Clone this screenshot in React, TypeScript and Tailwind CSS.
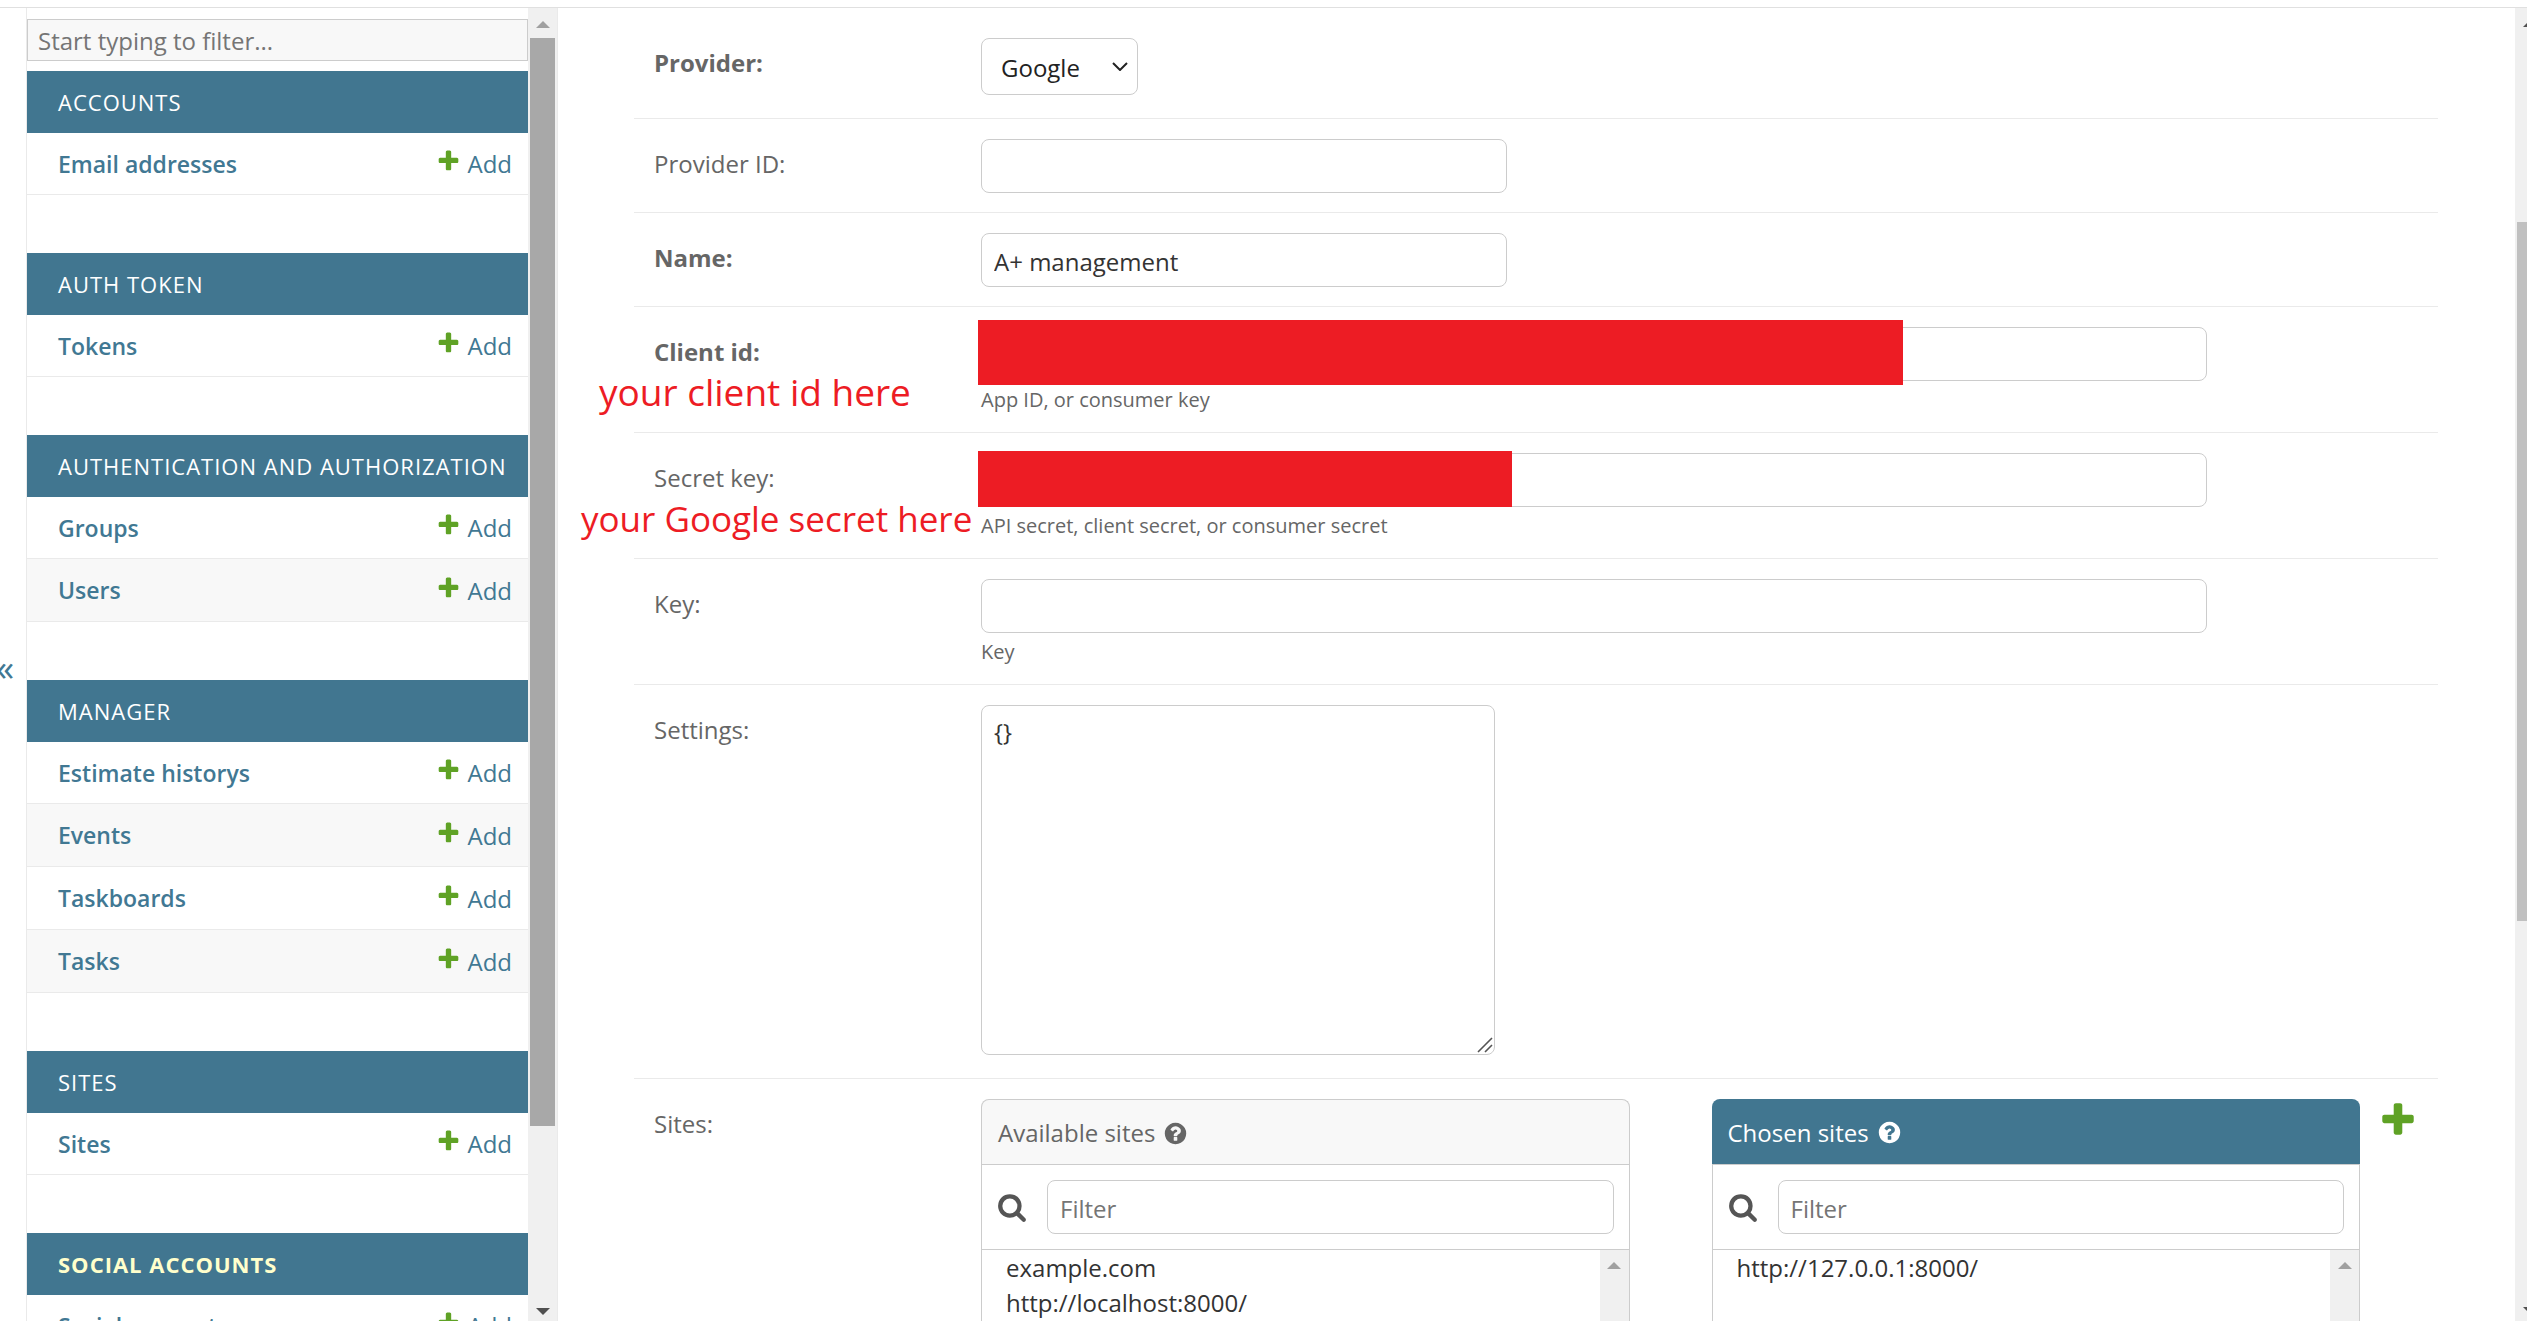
import type { ReactNode } from "react";

const PLUS =
  "M1600 796v192q0 40-28 68t-68 28h-416v416q0 40-28 68t-68 28h-192q-40 0-68-28t-28-68v-416h-416q-40 0-68-28t-28-68v-192q0-40 28-68t68-28h416v-416q0-40 28-68t68-28h192q40 0 68 28t28 68v416h416q40 0 68 28t28 68z";
const SEARCH =
  "M1216 832q0-185-131.5-316.5t-316.5-131.5-316.5 131.5-131.5 316.5 131.5 316.5 316.5 131.5 316.5-131.5 131.5-316.5zm512 832q0 52-38 90t-90 38q-54 0-90-38l-343-342q-179 124-399 124-143 0-273.5-55.5t-225-150-150-225-55.5-273.5 55.5-273.5 150-225 225-150 273.5-55.5 273.5 55.5 225 150 150 225 55.5 273.5q0 220-124 399l343 343q37 37 37 90z";
const HELP =
  "M1024 1376v-192q0-14-9-23t-23-9h-192q-14 0-23 9t-9 23v192q0 14 9 23t23 9h192q14 0 23-9t9-23zm256-672q0-88-55.5-163t-138.5-116-170-41q-243 0-371 213-15 24 8 42l132 100q7 6 19 6 16 0 25-12 53-68 86-92 34-24 86-24 48 0 85.5 26t37.5 59q0 38-20 61t-68 45q-63 28-115.5 86.5t-52.5 125.5v36q0 14 9 23t23 9h192q14 0 23-9t9-23q0-19 21.5-49.5t54.5-49.5q32-18 49-28.5t46-35 44.5-48 28-60.5 12.5-81zm384 192q0 209-103 385.5t-279.5 279.5-385.5 103-385.5-103-279.5-279.5-103-385.5 103-385.5 279.5-279.5 385.5-103 385.5 103 279.5 279.5 103 385.5z";

function Icon({ d, className }: { d: string; className: string }) {
  return (
    <svg viewBox="0 0 1792 1792" fill="currentColor" aria-hidden="true" className={className}>
      <path d={d} />
    </svg>
  );
}

function Arrow({ down = false, className }: { down?: boolean; className: string }) {
  return (
    <svg viewBox="0 0 14 7" fill="currentColor" aria-hidden="true" className={className}>
      <path d={down ? "M0 0h14L7 7z" : "M0 7h14L7 0z"} />
    </svg>
  );
}

const modules = [
  { name: "Accounts", models: ["Email addresses"] },
  { name: "Auth Token", models: ["Tokens"] },
  { name: "Authentication and Authorization", models: ["Groups", "Users"] },
  { name: "Manager", models: ["Estimate historys", "Events", "Taskboards", "Tasks"] },
  { name: "Sites", models: ["Sites"] },
  { name: "Social Accounts", models: ["Social accounts"], current: true },
];

function Sidebar() {
  return (
    <nav aria-label="Sidebar" className="flex w-[532px] shrink-0 border-x border-[#eaeaea]">
      <div className="min-w-0 flex-1 overflow-hidden pt-[11px]">
        <input
          type="search"
          aria-label="Filter navigation items"
          placeholder="Start typing to filter..."
          className="mb-[10px] block h-[42px] w-full border border-[#ccc] bg-[#f8f8f8] px-[10px] text-2xl text-[#333] outline-none placeholder:text-[#757575]"
        />
        {modules.map((m) => (
          <section key={m.name} className="mb-[58px]">
            <h2 className="flex h-[62px] items-center bg-[#417690] pt-px pl-[31px] text-[22px] whitespace-nowrap uppercase tracking-[1px]">
              <a href="#" className={m.current ? "font-bold text-[#ffc]" : "text-white"}>
                {m.name}
              </a>
            </h2>
            <ul>
              {m.models.map((model) => (
                <li
                  key={model}
                  className="flex h-[63px] items-center justify-between border-b border-[#eaeaea] pt-px pr-4 pl-[31px] text-2xl text-[#417893] first:h-[62px] even:bg-[#f8f8f8]"
                >
                  <a href="#" className="text-[23px] font-semibold">
                    {model}
                  </a>
                  <a href="#" className="flex items-center gap-1.5">
                    <Icon d={PLUS} className="mb-[7px] size-[25px] text-[#5fa225]" />
                    Add
                  </a>
                </li>
              ))}
            </ul>
          </section>
        ))}
      </div>
      <div className="flex w-[29px] shrink-0 flex-col items-center bg-[#f0f0f0]" aria-hidden="true">
        <div className="flex h-[30px] items-center pt-0.5">
          <Arrow className="h-[7px] w-[14px] text-[#a0a0a0]" />
        </div>
        <div className="w-[25px] grow-[1085] bg-[#a8a8a8]" />
        <div className="grow-[182]" />
        <div className="flex h-[13px] items-start">
          <Arrow down className="h-[7px] w-[14px] text-[#505050]" />
        </div>
      </div>
    </nav>
  );
}

const field =
  "block h-[54px] rounded-lg border border-[#ccc] bg-white px-3 pt-0.5 text-2xl text-[#333] outline-none placeholder:text-[#757575]";

type RowProps = {
  id: string;
  label: string;
  bold?: boolean;
  help?: string;
  note?: ReactNode;
  children: ReactNode;
};

function Row({ id, label, bold, help, note, children }: RowProps) {
  return (
    <div className="relative flex border-b border-[#eaeaea] px-5 pt-5 pb-[19px]">
      <label
        htmlFor={id}
        className={
          bold
            ? "w-[327px] shrink-0 self-start text-2xl leading-[50px] font-bold text-[#666]"
            : "w-[327px] shrink-0 self-start text-2xl leading-[50px] text-[#666]"
        }
      >
        {label}
      </label>
      <div className="min-w-0 flex-1">
        {children}
        {help && <p className="pt-1.5 text-xl leading-[26px] text-[#666]">{help}</p>}
      </div>
      {note}
    </div>
  );
}

function Selector({ title, chosen, options }: { title: string; chosen?: boolean; options: string[] }) {
  return (
    <div className="min-w-0 flex-1">
      <h2
        className={
          chosen
            ? "flex h-[65px] items-center gap-2 rounded-t-lg bg-[#417690] px-4 pt-0.5 text-2xl text-white"
            : "flex h-[65px] items-center gap-2 rounded-t-lg border border-b-0 border-[#ccc] bg-[#f8f8f8] px-4 pt-0.5 text-2xl text-[#666]"
        }
      >
        {title}
        <Icon d={HELP} className="size-[25px]" />
      </h2>
      <div className="flex items-center gap-5 border border-[#ccc] px-[15px] py-[15px]">
        <Icon d={SEARCH} className="size-[30px] shrink-0 text-[#555]" />
        <input type="text" placeholder="Filter" aria-label={"Filter " + title} className={field + " min-w-0 flex-1"} />
      </div>
      <div className="flex h-[300px] border-x border-[#ccc]">
        <select
          multiple
          aria-label={title}
          className="h-full min-w-0 flex-1 appearance-none overflow-hidden pt-px pl-5 text-2xl text-[#333] outline-none"
        >
          {options.map((o) => (
            <option key={o} className="h-[35px] p-0 pl-1 leading-[35px]">
              {o}
            </option>
          ))}
        </select>
        <div className="flex w-[29px] justify-center bg-[#f0f0f0] pt-3" aria-hidden="true">
          <Arrow className="h-[7px] w-[14px] text-[#a0a0a0]" />
        </div>
      </div>
    </div>
  );
}

function Note({ className, children }: { className: string; children: string }) {
  return (
    <span className={"absolute leading-10 whitespace-nowrap text-[#ed1c24] " + className}>
      {children}
    </span>
  );
}

export default function App() {
  return (
    <div className="flex h-screen flex-col overflow-hidden bg-white pt-[7px] font-['Open_Sans','Noto_Sans',sans-serif]">
      <div className="flex min-h-0 flex-1 border-t border-[#e0e0e0]">
        <button
          type="button"
          aria-label="Toggle navigation"
          className="mr-3 flex w-[14px] shrink-0 items-center justify-end overflow-hidden pt-1.5 text-4xl text-[#417893]"
        >
          «
        </button>
        <Sidebar />
        <main className="min-w-0 flex-1 overflow-hidden pt-[10px] pr-[77px] pl-[76px]">
          <form>
            <Row id="provider" label="Provider:" bold>
              <div className="relative mb-1 w-[157px]">
                <select
                  id="provider"
                  className="block h-[57px] w-full appearance-none rounded-lg border border-[#ccc] bg-white pt-0.5 pl-[19px] text-2xl text-[#222] outline-none"
                >
                  <option>Google</option>
                </select>
                <svg
                  viewBox="0 0 16 9"
                  fill="none"
                  stroke="#222"
                  strokeWidth="2"
                  aria-hidden="true"
                  className="pointer-events-none absolute top-6 right-[10px] h-[9px] w-4"
                >
                  <path d="M1 1l7 7 7-7" />
                </svg>
              </div>
            </Row>
            <Row id="provider_id" label="Provider ID:">
              <input id="provider_id" type="text" className={field + " w-[526px]"} />
            </Row>
            <Row id="name" label="Name:" bold>
              <input id="name" type="text" defaultValue="A+ management" className={field + " w-[526px]"} />
            </Row>
            <Row
              id="client_id"
              label="Client id:"
              bold
              help="App ID, or consumer key"
              note={<Note className="top-[65px] -left-[35px] text-[37px]">your client id here</Note>}
            >
              <div className="relative">
                <input id="client_id" type="text" className={field + " w-[1226px] max-w-full"} />
                <div className="absolute -top-[7px] -left-[3px] h-[65px] w-[925px] bg-[#ed1c24]" />
              </div>
            </Row>
            <Row
              id="secret"
              label="Secret key:"
              help="API secret, client secret, or consumer secret"
              note={<Note className="top-[66px] -left-[53px] text-[35px]">your Google secret here</Note>}
            >
              <div className="relative">
                <input id="secret" type="text" className={field + " w-[1226px] max-w-full"} />
                <div className="absolute -top-0.5 -left-[3px] h-[56px] w-[534px] bg-[#ed1c24]" />
              </div>
            </Row>
            <Row id="key" label="Key:" help="Key">
              <input id="key" type="text" className={field + " w-[1226px] max-w-full"} />
            </Row>
            <Row id="settings" label="Settings:">
              <div className="relative mb-1 w-[514px]">
                <textarea
                  id="settings"
                  defaultValue="{}"
                  className="block h-[350px] w-full resize-none rounded-lg border border-[#ccc] bg-white px-3 py-[10px] text-2xl text-[#333] outline-none"
                />
                <svg
                  viewBox="0 0 16 16"
                  stroke="#555"
                  strokeWidth="1.6"
                  aria-hidden="true"
                  className="pointer-events-none absolute right-0.5 bottom-0.5 size-4"
                >
                  <path d="M1 15L15 1M8 15l7-7" />
                </svg>
              </div>
            </Row>
            <Row id="sites" label="Sites:">
              <div className="flex items-start">
                <div className="flex min-w-0 flex-1 gap-[82px]">
                  <Selector title="Available sites" options={["example.com", "http://localhost:8000/"]} />
                  <Selector title="Chosen sites" chosen options={["http://127.0.0.1:8000/"]} />
                </div>
                <button id="sites" type="button" aria-label="Add another site" className="ml-[18px]">
                  <Icon d={PLUS} className="size-10 text-[#5fa225]" />
                </button>
              </div>
            </Row>
          </form>
        </main>
        <div className="flex w-3 shrink-0 flex-col items-end overflow-hidden bg-[#f0f0f0]" aria-hidden="true">
          <div className="flex h-[30px] w-1 items-center">
            <Arrow className="h-[7px] w-[14px] shrink-0 text-[#505050]" />
          </div>
          <div className="grow-[184]" />
          <div className="w-[10px] grow-[698] bg-[#c0c0c0]" />
          <div className="grow-[386]" />
          <div className="flex h-[14px] w-1 items-start">
            <Arrow down className="h-[7px] w-[14px] shrink-0 text-[#505050]" />
          </div>
        </div>
      </div>
    </div>
  );
}
